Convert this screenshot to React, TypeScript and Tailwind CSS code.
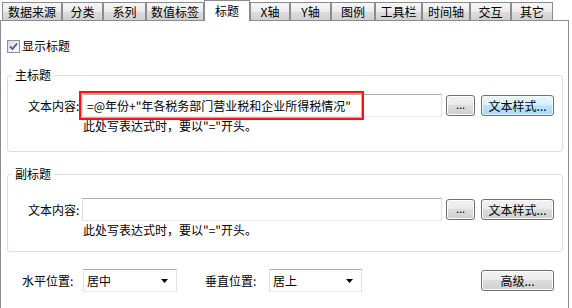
import React from 'react';

const tabs = [
  { name: '数据来源', w: 'w-[60px]' },
  { name: '分类', w: 'w-[41px]' },
  { name: '系列', w: 'w-[43px]' },
  { name: '数值标签', w: 'w-[58px]' },
  { name: '标题', w: 'w-[46px]', active: true },
  { name: 'X轴', w: 'w-[40px]' },
  { name: 'Y轴', w: 'w-[41px]' },
  { name: '图例', w: 'w-[44px]' },
  { name: '工具栏', w: 'w-[47px]' },
  { name: '时间轴', w: 'w-[48px]' },
  { name: '交互', w: 'w-[41px]' },
  { name: '其它', w: 'w-[42px]' },
];

const textBox =
  'border border-t-[#abadb3] border-l-[#dfe2e8] border-r-[#dfe2e8] border-b-[#e3e9ef] bg-white';

const WinButton: React.FC<{ w: string; focused?: boolean; children: React.ReactNode }> = ({ w, focused, children }) => (
  <button
    className={`h-[21px] ${w} rounded-[3px] border flex items-center justify-center leading-none ${
      focused
        ? 'border-[#3c7fb1] bg-[linear-gradient(to_bottom,#eaf6fd_0%,#d9f0fc_50%,#bee6fd_50%,#a7d9f5_100%)] shadow-[inset_0_0_0_1px_#ffffffaa]'
        : 'border-[#707070] bg-[linear-gradient(to_bottom,#f2f2f2_0%,#ebebeb_50%,#dddddd_50%,#cfcfcf_100%)] shadow-[inset_0_0_0_1px_#fcfcfc]'
    }`}
  >
    {children}
  </button>
);

const Dropdown: React.FC<{ value: string; w: string }> = ({ value, w }) => (
  <div className={`h-[23px] ${w} ${textBox} flex items-center justify-between pl-[3px] pr-[8px]`}>
    <span>{value}</span>
    <svg width="7" height="4" viewBox="0 0 7 4">
      <polygon points="0,0 7,0 3.5,4" fill="#000" />
    </svg>
  </div>
);

const TitleGroup: React.FC<{ legend: string; value?: string; highlight?: boolean; top: string; bottom: string }> = ({
  legend,
  value,
  highlight,
  top,
  bottom,
}) => (
  <fieldset className={`ml-[6px] w-[556px] rounded-[3px] border border-[#d5dfe5] p-0 ${bottom}`}>
    <legend className="ml-[4px] px-[3px] leading-[14px]">{legend}</legend>
    <div className={`flex items-center ${top}`}>
      <span className="ml-[20px] w-[54px]">文本内容:</span>
      <div className="relative">
        <div className={`h-[23px] w-[360px] ${textBox} flex items-center pl-[4px]`}>{value}</div>
        {highlight && (
          <div className="absolute left-[-3px] top-[-3px] h-[29px] w-[285px] border-2 border-[#ff1010] shadow-[inset_0_0_0_1px_#ff9a9a]" />
        )}
      </div>
      <div className="ml-[4px]">
        <WinButton w="w-[29px]">
          <span className="text-[11px] -mt-[3px]">...</span>
        </WinButton>
      </div>
      <div className="ml-[6px]">
        <WinButton w="w-[73px]" focused={highlight}>
          文本样式...
        </WinButton>
      </div>
    </div>
    <div className="ml-[75px] mt-[2px] leading-[14px]">此处写表达式时，要以"="开头。</div>
  </fieldset>
);

export default function App() {
  return (
    <div className="w-[572px] h-[308px] bg-white overflow-hidden text-[12px] text-black font-['Noto_Sans_CJK_SC','Noto_Sans',sans-serif]">
      {/* Tab strip */}
      <div className="h-[20px] flex items-end pl-[2px]">
        {tabs.map(t => (
          <div
            key={t.name}
            className={`${t.w} flex items-center justify-center border border-b-0 border-[#898c95] leading-none ${
              t.active
                ? 'h-[21px] -mb-px relative z-10 bg-white'
                : 'h-[18px] bg-[linear-gradient(to_bottom,#f7f7f7_0%,#ebebeb_50%,#dddddd_51%,#d0d0d0_100%)]'
            }`}
          >
            {t.name}
          </div>
        ))}
      </div>

      {/* Panel */}
      <div className="w-[569px] h-[288px] border border-b-0 border-[#898c95] bg-white">
        <div className="mt-[18px] ml-[6px] flex items-center h-[14px]">
          <div className="w-[13px] h-[13px] border border-[#8e8f8f] bg-[linear-gradient(135deg,#dcdcdc,#fbfbfb)] flex items-center justify-center">
            <svg width="9" height="9" viewBox="0 0 9 9">
              <path d="M1 4.5 L3.5 7 L8 1.5" stroke="#3f5a9b" strokeWidth="1.8" fill="none" />
            </svg>
          </div>
          <span className="ml-[2px]">显示标题</span>
        </div>

        <div className="mt-[15px]">
          <TitleGroup
            legend="主标题"
            value={'=@年份+"年各税务部门营业税和企业所得税情况"'}
            highlight
            top="mt-[12px]"
            bottom="h-[84px]"
          />
        </div>

        <div className="mt-[15px]">
          <TitleGroup legend="副标题" top="mt-[17px]" bottom="h-[85px]" />
        </div>

        <div className="mt-[17px] flex items-center">
          <span className="ml-[21px] w-[61px]">水平位置:</span>
          <Dropdown value="居中" w="w-[94px]" />
          <span className="ml-[28px] w-[64px]">垂直位置:</span>
          <Dropdown value="居上" w="w-[93px]" />
          <div className="ml-[119px]">
            <WinButton w="w-[73px]">高级...</WinButton>
          </div>
        </div>
      </div>
    </div>
  );
}
